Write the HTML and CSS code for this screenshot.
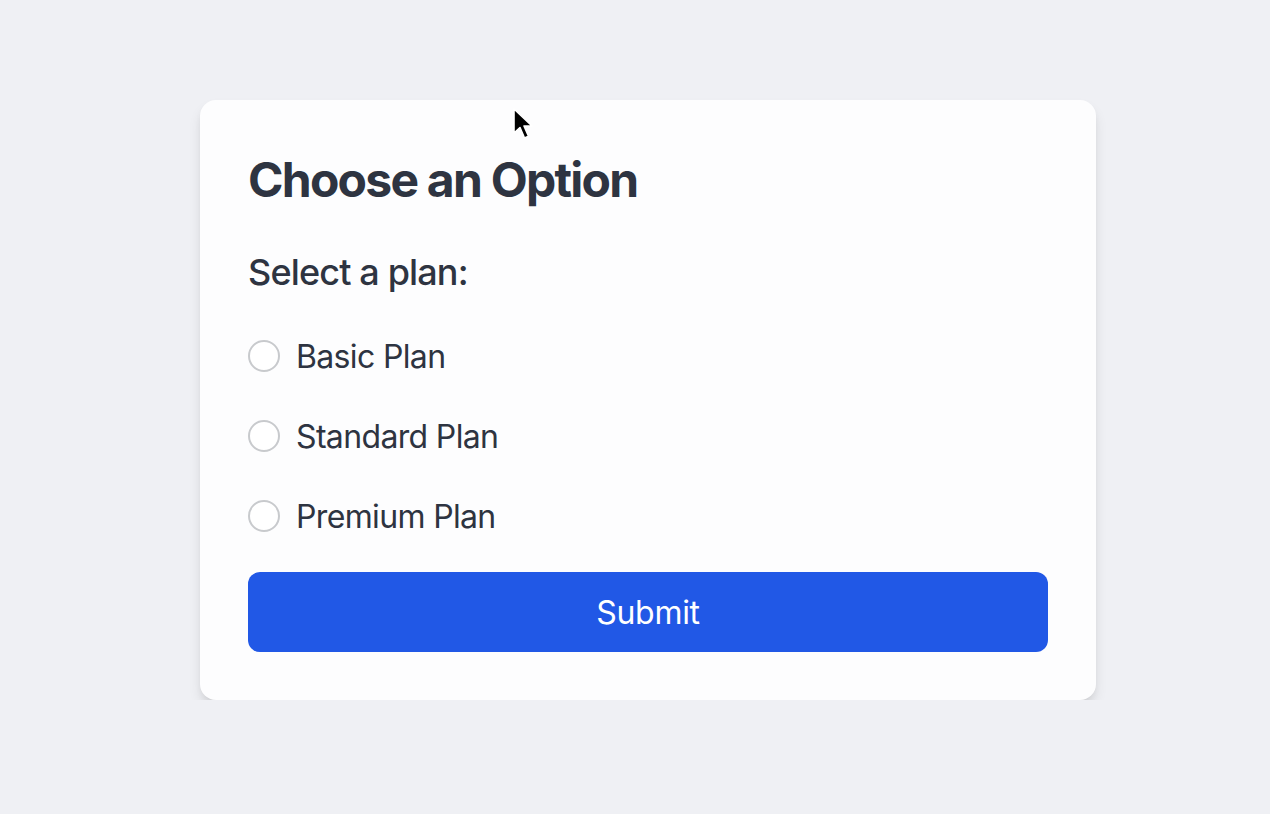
FILE: index.html
```html
<!DOCTYPE html>
<html lang="en">
<head>
    <meta charset="UTF-8">
    <meta name="viewport" content="width=device-width, initial-scale=1.0">
    <title>Choose an Option</title>
    <link rel="stylesheet" href="styles.css">
</head>
<body>

<div class="card">
    <h2 class="title">Choose an Option</h2>

    <form id="planForm">
        <p class="prompt">Select a plan:</p>

        <label class="option">
            <input type="radio" name="plan" value="basic">
            <span>Basic Plan</span>
        </label>

        <label class="option">
            <input type="radio" name="plan" value="standard">
            <span>Standard Plan</span>
        </label>

        <label class="option">
            <input type="radio" name="plan" value="premium">
            <span>Premium Plan</span>
        </label>

        <button type="submit" class="submit">Submit</button>
    </form>
</div>

<!-- mouse pointer from the recording -->
<svg class="pointer" width="22" height="34" viewBox="0 0 22 34">
    <path d="M2 2 L2 26 L8 20.5 L12.5 31 L16.5 29.2 L12 19 L20 19 Z" fill="#000" stroke="#fff" stroke-width="1.6" stroke-linejoin="round"/>
</svg>

</body>
</html>
```

FILE: styles.css
```css
body {
    margin: 0;
    background-color: #eff0f4;
    font-family: Inter, "Noto Sans", sans-serif;
    color: #2e3441;
}
.card {
    width: 896px;
    box-sizing: border-box;
    margin: 100px 0 0 200px;
    padding: 48px;
    background-color: #fdfdfe;
    border-radius: 16px;
    box-shadow: 0 8px 14px -2px rgba(0, 0, 0, 0.12), 0 4px 8px -4px rgba(0, 0, 0, 0.1);
}
.title {
    margin: 0 0 32px;
    font-size: 48px;
    line-height: 64px;
    font-weight: 700;
    letter-spacing: -1.75px;
}
.prompt {
    margin: 0 0 32px;
    font-size: 36px;
    line-height: 56px;
    font-weight: 500;
    letter-spacing: -0.85px;
}
.option {
    display: flex;
    align-items: center;
    height: 48px;
    margin-bottom: 32px;
    font-size: 32px;
    letter-spacing: -0.65px;
    cursor: pointer;
}
.option input {
    appearance: none;
    width: 32px;
    height: 32px;
    margin: 0 16px 0 0;
    border: 2px solid #c8cacd;
    border-radius: 50%;
    background-color: #fff;
}
.submit {
    display: block;
    width: 100%;
    height: 80px;
    border: none;
    border-radius: 12px;
    background-color: #2158e6;
    color: white;
    font-family: inherit;
    font-size: 32px;
    letter-spacing: -0.3px;
    cursor: pointer;
}
.pointer {
    position: absolute;
    left: 512px;
    top: 107px;
}
```
